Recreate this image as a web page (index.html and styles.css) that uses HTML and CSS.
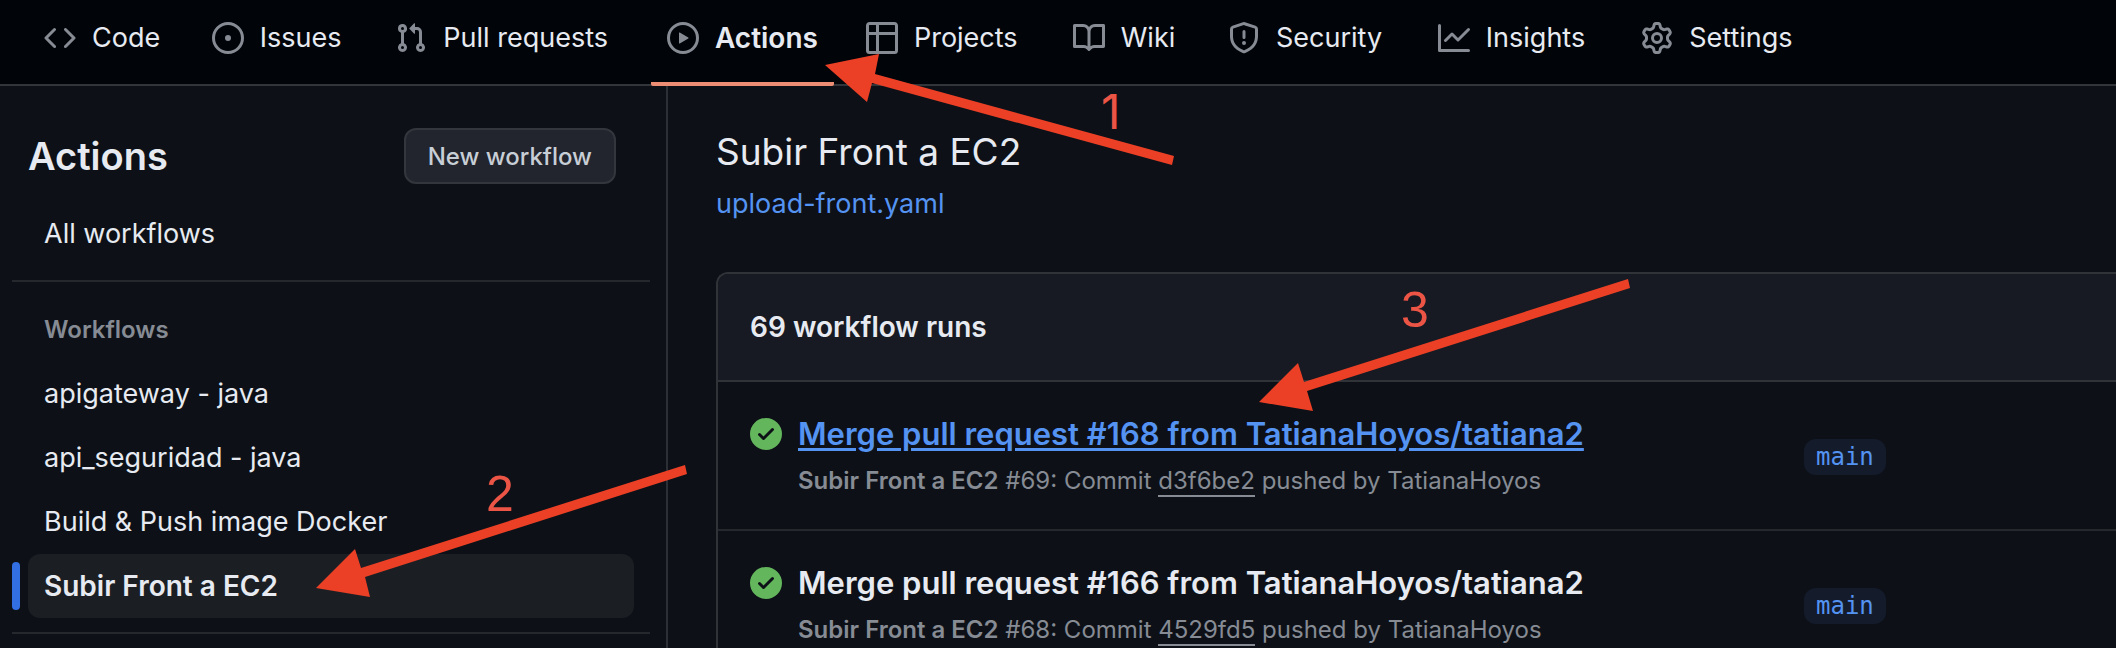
FILE: index.html
```html
<!DOCTYPE html>
<html lang="en">
<head>
<meta charset="utf-8">
<title>Actions - Subir Front a EC2</title>
<link rel="stylesheet" href="styles.css">
</head>
<body>
<div class="page">
  <nav class="repo-nav" aria-label="Repository">
    <a class="tab" href="#code">
      <svg class="icon" viewBox="0 0 16 16" aria-hidden="true"><path d="m11.28 3.22 4.25 4.25a.75.75 0 0 1 0 1.06l-4.25 4.25a.749.749 0 0 1-1.275-.326.749.749 0 0 1 .215-.734L13.94 8l-3.72-3.72a.749.749 0 0 1 .326-1.275.749.749 0 0 1 .734.215Zm-6.56 0a.751.751 0 0 1 1.042.018.751.751 0 0 1 .018 1.042L2.06 8l3.72 3.72a.749.749 0 0 1-.326 1.275.749.749 0 0 1-.734-.215L.47 8.53a.75.75 0 0 1 0-1.06Z"/></svg>
      <span class="tab-label" data-label="Code">Code</span>
    </a>
    <a class="tab" href="#issues">
      <svg class="icon" viewBox="0 0 16 16" aria-hidden="true"><path d="M8 9.5a1.5 1.5 0 1 0 0-3 1.5 1.5 0 0 0 0 3Z"/><path d="M8 0a8 8 0 1 1 0 16A8 8 0 0 1 8 0ZM1.5 8a6.5 6.5 0 1 0 13 0 6.5 6.5 0 0 0-13 0Z"/></svg>
      <span class="tab-label" data-label="Issues">Issues</span>
    </a>
    <a class="tab" href="#pulls">
      <svg class="icon" viewBox="0 0 16 16" aria-hidden="true"><path d="M1.5 3.25a2.25 2.25 0 1 1 3 2.122v5.256a2.251 2.251 0 1 1-1.5 0V5.372A2.25 2.25 0 0 1 1.5 3.25Zm5.677-.177L9.573.677A.25.25 0 0 1 10 .854V2.5h1A2.5 2.5 0 0 1 13.5 5v5.628a2.251 2.251 0 1 1-1.5 0V5a1 1 0 0 0-1-1h-1v1.646a.25.25 0 0 1-.427.177L7.177 3.427a.25.25 0 0 1 0-.354ZM3.75 2.5a.75.75 0 1 0 0 1.5.75.75 0 0 0 0-1.5Zm0 9.5a.75.75 0 1 0 0 1.5.75.75 0 0 0 0-1.5Zm8.25.75a.75.75 0 1 0 1.5 0 .75.75 0 0 0-1.5 0Z"/></svg>
      <span class="tab-label" data-label="Pull requests">Pull requests</span>
    </a>
    <a class="tab tab-current" href="#actions" aria-current="page">
      <svg class="icon" viewBox="0 0 16 16" aria-hidden="true"><path d="M8 0a8 8 0 1 1 0 16A8 8 0 0 1 8 0ZM1.5 8a6.5 6.5 0 1 0 13 0 6.5 6.5 0 0 0-13 0Zm4.879-2.773 4.264 2.559a.25.25 0 0 1 0 .428l-4.264 2.559A.25.25 0 0 1 6 10.559V5.442a.25.25 0 0 1 .379-.215Z"/></svg>
      <span class="tab-label" data-label="Actions">Actions</span>
    </a>
    <a class="tab" href="#projects">
      <svg class="icon" viewBox="0 0 16 16" aria-hidden="true"><path d="M0 1.75C0 .784.784 0 1.75 0h12.5C15.216 0 16 .784 16 1.75v12.5A1.75 1.75 0 0 1 14.25 16H1.75A1.75 1.75 0 0 1 0 14.25ZM6.5 6.5v8h7.75a.25.25 0 0 0 .25-.25V6.5Zm8-1.5V1.75a.25.25 0 0 0-.25-.25H6.5V5Zm-13 1.5v7.75c0 .138.112.25.25.25H5v-8ZM5 5V1.5H1.75a.25.25 0 0 0-.25.25V5Z"/></svg>
      <span class="tab-label" data-label="Projects">Projects</span>
    </a>
    <a class="tab" href="#wiki">
      <svg class="icon" viewBox="0 0 16 16" aria-hidden="true"><path d="M0 1.75A.75.75 0 0 1 .75 1h4.253c1.227 0 2.317.59 3 1.501A3.743 3.743 0 0 1 11.006 1h4.245a.75.75 0 0 1 .75.75v10.5a.75.75 0 0 1-.75.75h-4.507a2.25 2.25 0 0 0-1.591.659l-.622.621a.75.75 0 0 1-1.06 0l-.622-.621A2.25 2.25 0 0 0 5.258 13H.75a.75.75 0 0 1-.75-.75Zm7.251 10.324.004-5.073-.002-2.253A2.25 2.25 0 0 0 5.003 2.5H1.5v9h3.757a3.75 3.75 0 0 1 1.994.574ZM8.755 4.75l-.004 7.322a3.752 3.752 0 0 1 1.992-.572H14.5v-9h-3.495a2.25 2.25 0 0 0-2.25 2.25Z"/></svg>
      <span class="tab-label" data-label="Wiki">Wiki</span>
    </a>
    <a class="tab" href="#security">
      <svg class="icon" viewBox="0 0 16 16" aria-hidden="true"><path d="M7.467.133a1.748 1.748 0 0 1 1.066 0l5.25 1.68A1.75 1.75 0 0 1 15 3.48V7c0 1.566-.32 3.182-1.303 4.682-.983 1.498-2.585 2.813-5.032 3.855a1.697 1.697 0 0 1-1.33 0c-2.447-1.042-4.049-2.357-5.032-3.855C1.32 10.182 1 8.566 1 7V3.48a1.75 1.75 0 0 1 1.217-1.667Zm.61 1.429a.25.25 0 0 0-.153 0l-5.25 1.68a.25.25 0 0 0-.174.238V7c0 1.358.275 2.666 1.057 3.86.784 1.194 2.121 2.34 4.366 3.297a.196.196 0 0 0 .154 0c2.245-.956 3.582-2.104 4.366-3.298C13.225 9.666 13.5 8.36 13.5 7V3.48a.251.251 0 0 0-.174-.237l-5.25-1.68ZM8.75 4.75v3a.75.75 0 0 1-1.5 0v-3a.75.75 0 0 1 1.5 0ZM9 10.5a1 1 0 1 1-2 0 1 1 0 0 1 2 0Z"/></svg>
      <span class="tab-label" data-label="Security">Security</span>
    </a>
    <a class="tab" href="#insights">
      <svg class="icon" viewBox="0 0 16 16" aria-hidden="true"><path d="M1.5 1.75V13.5h13.75a.75.75 0 0 1 0 1.5H.75a.75.75 0 0 1-.75-.75V1.75a.75.75 0 0 1 1.5 0Zm14.28 2.53-5.25 5.25a.75.75 0 0 1-1.06 0L7 7.06 4.28 9.78a.751.751 0 0 1-1.042-.018.751.751 0 0 1-.018-1.042l3.25-3.25a.75.75 0 0 1 1.06 0L10 7.94l4.72-4.72a.751.751 0 0 1 1.042.018.751.751 0 0 1 .018 1.042Z"/></svg>
      <span class="tab-label" data-label="Insights">Insights</span>
    </a>
    <a class="tab" href="#settings">
      <svg class="icon" viewBox="0 0 16 16" aria-hidden="true"><path d="M8 0a8.2 8.2 0 0 1 .701.031C9.444.095 9.99.645 10.16 1.29l.288 1.107c.018.066.079.158.212.224.231.114.454.243.668.386.123.082.233.09.299.071l1.103-.303c.644-.176 1.392.021 1.82.63.27.385.506.792.704 1.218.315.675.111 1.422-.364 1.891l-.814.806c-.049.048-.098.147-.088.294.016.257.016.515 0 .772-.01.147.038.246.088.294l.814.806c.475.469.679 1.216.364 1.891a7.977 7.977 0 0 1-.704 1.217c-.428.61-1.176.807-1.82.63l-1.102-.302c-.067-.019-.177-.011-.3.071a5.909 5.909 0 0 1-.668.386c-.133.066-.194.158-.211.224l-.29 1.106c-.168.646-.715 1.196-1.458 1.26a8.006 8.006 0 0 1-1.402 0c-.743-.064-1.289-.614-1.458-1.26l-.289-1.106c-.018-.066-.079-.158-.212-.224a5.738 5.738 0 0 1-.668-.386c-.123-.082-.233-.09-.299-.071l-1.103.303c-.644.176-1.392-.021-1.82-.63a8.12 8.12 0 0 1-.704-1.218c-.315-.675-.111-1.422.363-1.891l.815-.806c.05-.048.098-.147.088-.294a6.214 6.214 0 0 1 0-.772c.01-.147-.038-.246-.088-.294l-.815-.806C.635 6.045.431 5.298.746 4.623a7.92 7.92 0 0 1 .704-1.217c.428-.61 1.176-.807 1.82-.63l1.102.302c.067.019.177.011.3-.071.214-.143.437-.272.668-.386.133-.066.194-.158.211-.224l.29-1.106C6.009.645 6.556.095 7.299.03 7.53.01 7.764 0 8 0Zm-.571 1.525c-.036.003-.108.036-.137.146l-.289 1.105c-.147.561-.549.967-.998 1.189-.173.086-.34.183-.5.29-.417.278-.97.423-1.529.27l-1.103-.303c-.109-.03-.175.016-.195.045-.22.312-.412.644-.573.99-.014.031-.021.11.059.19l.815.806c.411.406.562.957.53 1.456a4.709 4.709 0 0 0 0 .582c.032.499-.119 1.05-.53 1.456l-.815.806c-.081.08-.073.159-.059.19.162.346.353.677.573.989.02.03.085.076.195.046l1.102-.303c.56-.153 1.113-.008 1.53.27.161.107.328.204.501.29.447.222.85.629.997 1.189l.289 1.105c.029.109.101.143.137.146a6.6 6.6 0 0 0 1.142 0c.036-.003.108-.036.137-.146l.289-1.105c.147-.561.549-.967.998-1.189.173-.086.34-.183.5-.29.417-.278.97-.423 1.529-.27l1.103.303c.109.029.175-.016.195-.045.22-.313.411-.644.573-.99.014-.031.021-.11-.059-.19l-.815-.806c-.411-.406-.562-.957-.53-1.456a4.709 4.709 0 0 0 0-.582c-.032-.499.119-1.05.53-1.456l.815-.806c.081-.08.073-.159.059-.19a6.464 6.464 0 0 0-.573-.989c-.02-.03-.085-.076-.195-.046l-1.102.303c-.56.153-1.113.008-1.53-.27a4.44 4.44 0 0 0-.501-.29c-.447-.222-.85-.629-.997-1.189l-.289-1.105c-.029-.11-.101-.143-.137-.146a6.6 6.6 0 0 0-1.142 0ZM11 8a3 3 0 1 1-6 0 3 3 0 0 1 6 0ZM9.5 8a1.5 1.5 0 1 0-3.001.001A1.5 1.5 0 0 0 9.5 8Z"/></svg>
      <span class="tab-label" data-label="Settings">Settings</span>
    </a>
  </nav>

  <div class="layout">
    <aside class="sidebar">
      <header class="sidebar-head">
        <h2 class="sidebar-title">Actions</h2>
        <button class="button" type="button">New workflow</button>
      </header>
      <a class="side-link" href="#all">All workflows</a>
      <hr class="divider">
      <h3 class="side-group">Workflows</h3>
      <a class="side-link" href="#apigateway">apigateway - java</a>
      <a class="side-link" href="#api-seguridad">api_seguridad - java</a>
      <a class="side-link" href="#docker">Build &amp; Push image Docker</a>
      <a class="side-link side-link-current" href="#front" aria-current="page">Subir Front a EC2</a>
      <hr class="divider">
    </aside>

    <main class="content">
      <h1 class="title">Subir Front a EC2</h1>
      <a class="file-link" href="#file">upload-front.yaml</a>
      <section class="runs">
        <h2 class="runs-head">69 workflow runs</h2>
        <article class="run">
          <svg class="icon icon-success" viewBox="0 0 16 16" role="img" aria-label="Success"><path d="M8 16A8 8 0 1 1 8 0a8 8 0 0 1 0 16Zm3.78-9.72a.751.751 0 0 0-.018-1.042.751.751 0 0 0-1.042-.018L6.75 9.19 5.28 7.72a.751.751 0 0 0-1.042.018.751.751 0 0 0-.018 1.042l2 2a.75.75 0 0 0 1.06 0Z"/></svg>
          <div class="run-body">
            <a class="run-title run-title-hover" href="#run69">Merge pull request #168 from TatianaHoyos/tatiana2</a>
            <p class="run-meta"><b>Subir Front a EC2</b> #69: Commit <a class="commit" href="#d3f6be2">d3f6be2</a> pushed by TatianaHoyos</p>
          </div>
          <div class="run-branch"><a class="branch" href="#main">main</a></div>
        </article>
        <article class="run">
          <svg class="icon icon-success" viewBox="0 0 16 16" role="img" aria-label="Success"><path d="M8 16A8 8 0 1 1 8 0a8 8 0 0 1 0 16Zm3.78-9.72a.751.751 0 0 0-.018-1.042.751.751 0 0 0-1.042-.018L6.75 9.19 5.28 7.72a.751.751 0 0 0-1.042.018.751.751 0 0 0-.018 1.042l2 2a.75.75 0 0 0 1.06 0Z"/></svg>
          <div class="run-body">
            <a class="run-title" href="#run68">Merge pull request #166 from TatianaHoyos/tatiana2</a>
            <p class="run-meta"><b>Subir Front a EC2</b> #68: Commit <a class="commit" href="#4529fd5">4529fd5</a> pushed by TatianaHoyos</p>
          </div>
          <div class="run-branch"><a class="branch" href="#main">main</a></div>
        </article>
      </section>
    </main>
  </div>

  <svg class="annotations" width="2116" height="648" viewBox="0 0 2116 648" role="img" aria-label="Steps 1, 2 and 3">
    <path d="M825 65 879 54 875 74 1174 156 1172 165 872 83 867 102Z"/>
    <path d="M316 588 355 549 361 568 685 465 687 474 365 577 370 597Z"/>
    <path d="M1259 402 1298 363 1304 382 1628 279 1630 288 1307 391 1313 411Z"/>
    <text class="digit-one" x="1101" y="129">1</text>
    <text x="486" y="511">2</text>
    <text x="1401" y="327">3</text>
  </svg>
</div>
</body>
</html>
```
FILE: styles.css
```css
* { box-sizing: border-box; }

body {
  margin: 0;
  background: #0d1117;
  color: #e7ebf1;
  font-family: Inter, "Liberation Sans", sans-serif;
  font-size: 27px;
  line-height: 40px;
}

a { color: inherit; text-decoration: none; }
h1, h2, h3, p { margin: 0; }

.page {
  position: relative;
  display: flex;
  flex-direction: column;
  height: 100vh;
  overflow: hidden;
}

.icon {
  flex: none;
  width: 32px;
  height: 32px;
  fill: #868b94;
}

/* Repository tabs */
.repo-nav {
  display: flex;
  flex: none;
  gap: 16px;
  height: 86px;
  padding: 0 28px;
  background: #010409;
  border-bottom: 2px solid #32353a;
}

.tab {
  display: flex;
  gap: 16px;
  height: 86px;
  padding: 18px 16px 24px;
  align-items: center;
  border-bottom: 4px solid transparent;
  white-space: nowrap;
}

/* Reserves the width of the bold label, so that tabs keep their place */
.tab-label::after {
  content: attr(data-label);
  display: block;
  height: 0;
  overflow: hidden;
  visibility: hidden;
  font-size: 28px;
  font-weight: 600;
}

.tab-current {
  border-bottom-color: #ed8e74;
  border-radius: 2px;
  font-size: 28px;
  font-weight: 600;
}

.layout {
  display: flex;
  flex: 1;
}

/* Sidebar */
.sidebar {
  flex: none;
  width: 668px;
  border-right: 2px solid #2c3036;
}

.sidebar-head {
  display: flex;
  justify-content: space-between;
  align-items: center;
  padding: 42px 50px 18px 28px;
}

.sidebar-title {
  font-size: 38px;
  font-weight: 600;
}

.button {
  height: 56px;
  padding: 0 22px;
  background: #22252d;
  border: 2px solid #33363c;
  border-radius: 12px;
  color: #c8ced6;
  font: 500 24px Inter, "Liberation Sans", sans-serif;
}

.side-link {
  display: block;
  margin: 0 32px 0 28px;
  padding: 12px 16px;
  border-radius: 12px;
}

.side-link-current {
  position: relative;
  background: #1b1f24;
  font-size: 28px;
  font-weight: 600;
}

.side-link-current::before {
  content: "";
  position: absolute;
  top: 8px;
  bottom: 8px;
  left: -16px;
  width: 8px;
  border-radius: 4px;
  background: #316fe3;
}

.divider {
  height: 2px;
  margin: 14px 16px 16px 12px;
  border: 0;
  background: #25282d;
}

.side-group {
  padding: 12px 44px;
  color: #868b94;
  font-size: 24px;
  font-weight: 600;
}

/* Run list */
.content {
  flex: 1;
  min-width: 0;
  padding: 42px 0 0 48px;
}

.title {
  font-size: 37px;
  font-weight: 400;
  line-height: 48px;
}

.file-link {
  display: block;
  margin: 8px 0 48px;
  color: #5593f2;
}

.runs {
  border: 2px solid #303439;
  border-right: 0;
  border-radius: 12px 0 0 0;
}

.runs-head {
  padding: 33px 32px;
  background: #171a22;
  border-bottom: 2px solid #303439;
  border-radius: 10px 0 0 0;
  font-size: 28px;
  font-weight: 600;
}

.run {
  display: flex;
  gap: 16px;
  padding: 32px 0 30px 32px;
}

.run + .run { border-top: 2px solid #25282d; }

.icon-success {
  margin-top: 4px;
  fill: #63b65c;
}

.run-body { flex: 1; }

.run-title {
  display: block;
  font-size: 31px;
  font-weight: 600;
}

.run-title-hover {
  color: #5593f2;
  text-decoration: underline;
  text-decoration-thickness: 3px;
  text-underline-offset: 3px;
}

.run-meta {
  margin-top: 9px;
  color: #868b94;
  font-size: 24px;
  line-height: 36px;
}

.run-meta b { font-weight: 600; }

.commit { border-bottom: 2px solid #868b94; }

.run-branch {
  display: flex;
  width: 312px;
  align-items: flex-start;
  padding-top: 25px;
}

.branch {
  padding: 0 12px;
  border-radius: 12px;
  background: #141c2c;
  color: #5593f2;
  font: 24px/36px "DejaVu Sans Mono", monospace;
}

/* Numbered arrows over the page */
.annotations {
  position: absolute;
  top: 0;
  left: 0;
  fill: #ec4026;
  pointer-events: none;
}

.annotations text {
  fill: #ec5545;
  font: 50px "Liberation Sans", sans-serif;
}

.annotations .digit-one { font: 48px Inter, sans-serif; }
```
